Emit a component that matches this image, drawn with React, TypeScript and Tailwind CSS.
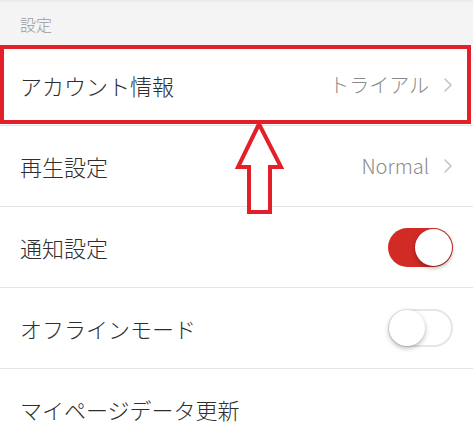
import React from "react";

const font = { fontFamily: '"Noto Sans CJK JP", "Noto Sans", sans-serif' };

function Chevron() {
  return (
    <svg width="10" height="16" viewBox="0 0 10 16" fill="none" className="ml-[14px]">
      <path d="M2 2l6 6-6 6" stroke="#c4c4c8" strokeWidth="1.6" strokeLinecap="round" strokeLinejoin="round" />
    </svg>
  );
}

function Toggle({ on }: { on: boolean }) {
  return on ? (
    <div className="relative h-[39px] w-[65px] rounded-full bg-[#d22b26]">
      <div className="absolute right-[1px] top-[1px] h-[37px] w-[37px] rounded-full bg-white shadow-[0_2px_4px_rgba(0,0,0,0.35)]" />
    </div>
  ) : (
    <div className="relative h-[38px] w-[65px] rounded-full border-2 border-[#e6e6e6] bg-white">
      <div className="absolute left-[-1px] top-[-1px] h-[36px] w-[36px] rounded-full bg-white shadow-[0_2px_5px_rgba(0,0,0,0.3)]" />
    </div>
  );
}

function Row({ label, children }: { label: string; children?: React.ReactNode }) {
  return (
    <div className="flex h-[81px] items-center justify-between border-b border-[#e4e4e4] pl-5 pr-[20px]">
      <span className="text-[22px] font-light text-[#2e2e2e]">{label}</span>
      {children}
    </div>
  );
}

export default function App() {
  return (
    <div className="relative h-[445px] w-[473px] overflow-hidden bg-white" style={font}>
      <div className="flex h-[45px] items-center border-t-2 border-[#ececec] bg-[#f4f4f4] pl-5 text-[16px] font-light text-[#9a9a9a]">
        設定
      </div>

      <div className="relative">
        <Row label="アカウント情報">
          <span className="flex items-center text-[20px] font-light text-[#8a8a8a]">
            トライアル
            <Chevron />
          </span>
        </Row>
        {/* annotation box */}
        <div className="absolute left-0 top-0 h-[79px] w-[471px] border-4 border-[#e3202a]" />
      </div>

      <Row label="再生設定">
        <span className="flex items-center text-[20px] font-light text-[#8a8a8a]">
          Normal
          <Chevron />
        </span>
      </Row>
      <Row label="通知設定">
        <Toggle on />
      </Row>
      <Row label="オフラインモード">
        <Toggle on={false} />
      </Row>
      <Row label="マイページデータ更新" />

      {/* annotation arrow */}
      <svg className="absolute left-0 top-0" width="473" height="445" viewBox="0 0 473 445" fill="none">
        <path
          d="M259 124L238 167H249V212H270V167H281Z"
          fill="white"
          stroke="#e3202a"
          strokeWidth="4"
          strokeLinejoin="miter"
        />
      </svg>
    </div>
  );
}
